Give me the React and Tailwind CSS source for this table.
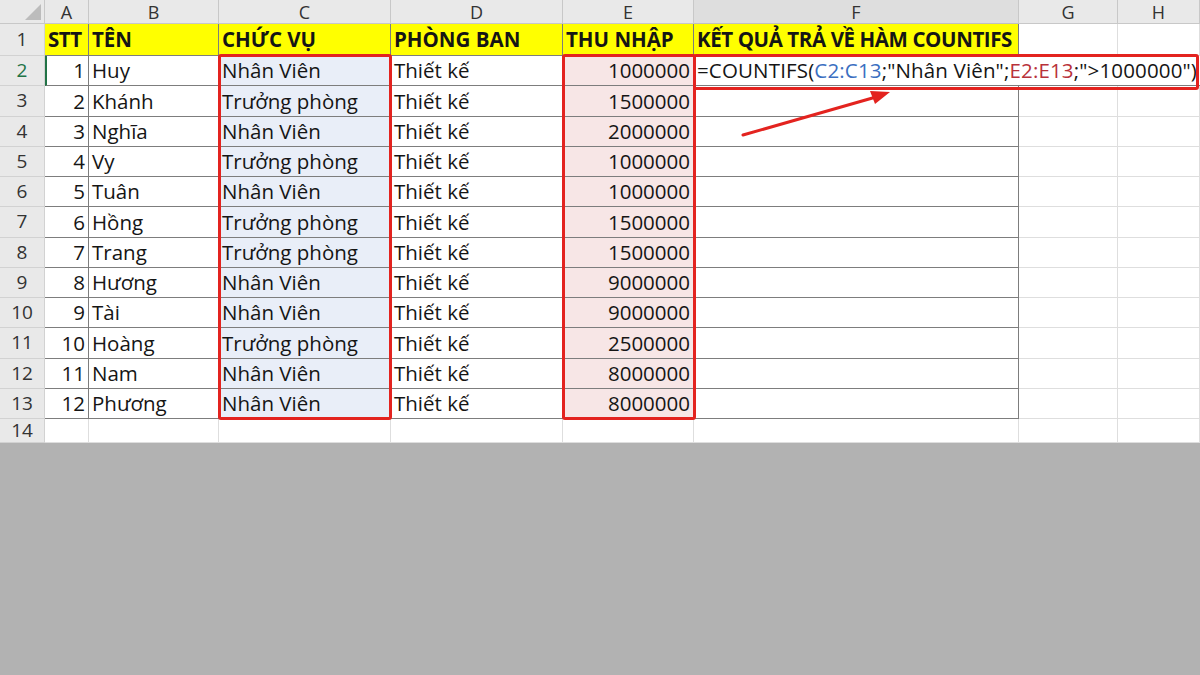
import React from 'react';

const rows = [
  [1, 'Huy', 'Nhân Viên', '1000000'],
  [2, 'Khánh', 'Trưởng phòng', '1500000'],
  [3, 'Nghĩa', 'Nhân Viên', '2000000'],
  [4, 'Vy', 'Trưởng phòng', '1000000'],
  [5, 'Tuân', 'Nhân Viên', '1000000'],
  [6, 'Hồng', 'Trưởng phòng', '1500000'],
  [7, 'Trang', 'Trưởng phòng', '1500000'],
  [8, 'Hương', 'Nhân Viên', '9000000'],
  [9, 'Tài', 'Nhân Viên', '9000000'],
  [10, 'Hoàng', 'Trưởng phòng', '2500000'],
  [11, 'Nam', 'Nhân Viên', '8000000'],
  [12, 'Phương', 'Nhân Viên', '8000000'],
];

const letters = ['A', 'B', 'C', 'D', 'E', 'F', 'G', 'H'];

// table cell with dark border
function Cell({ children, className = '' }) {
  return (
    <div className={`flex items-center px-[3px] border-r border-b border-[#7d7d7d] whitespace-nowrap overflow-visible leading-none ${className}`}>
      {children}
    </div>
  );
}

function Empty() {
  return <div className="border-r border-b border-[#dedede]" />;
}

function RowHead({ n, active }) {
  return (
    <div className={`flex items-center justify-center bg-[#e9e9e9] border-r border-b border-[#d2d2d2] text-[19px] leading-none ${active ? 'text-[#217346]' : 'text-[#333]'}`}>
      {n}
    </div>
  );
}

export default function App() {
  return (
    <div className="w-[1200px] h-[675px] bg-[#b2b2b2] overflow-hidden" style={{ fontFamily: '"Open Sans", "Noto Sans", sans-serif' }}>
      <div className="relative h-[443px] bg-white overflow-hidden text-[20.5px] text-[#151515]">
        <div className="grid grid-cols-[45px_44px_130px_172px_172px_131px_325px_99px_82px] grid-rows-[24px_32px_repeat(12,30.25px)_24px]">
          {/* column header */}
          <div className="bg-[#e9e9e9] border-r border-b border-[#c8c8c8] flex items-end justify-end p-[3px]">
            <div className="w-0 h-0 border-l-[16px] border-l-transparent border-b-[16px] border-b-[#bcbcbc]" />
          </div>
          {letters.map((l) => (
            <div
              key={l}
              className={`flex items-center justify-center border-r border-b text-[18px] leading-none text-[#333] ${l === 'F' ? 'bg-[#dedede] border-b-[#c0c0c0] border-r-[#c8c8c8]' : 'bg-[#e9e9e9] border-[#c8c8c8]'}`}
            >
              {l}
            </div>
          ))}

          {/* row 1 */}
          <RowHead n={1} />
          <Cell className="bg-[#ffff00] font-bold tracking-[-0.5px]">STT</Cell>
          <Cell className="bg-[#ffff00] font-bold">TÊN</Cell>
          <Cell className="bg-[#ffff00] font-bold">CHỨC VỤ</Cell>
          <Cell className="bg-[#ffff00] font-bold">PHÒNG BAN</Cell>
          <Cell className="bg-[#ffff00] font-bold">THU NHẬP</Cell>
          <Cell className="bg-[#ffff00] font-bold tracking-[-0.4px]">KẾT QUẢ TRẢ VỀ HÀM COUNTIFS</Cell>
          <Empty />
          <Empty />

          {rows.map(([n, name, role, pay], i) => (
            <React.Fragment key={n}>
              <RowHead n={i + 2} active={i === 0} />
              <Cell className={`justify-end ${i === 0 ? 'border-l-2 border-l-[#217346]' : ''}`}>{n}</Cell>
              <Cell>{name}</Cell>
              <Cell className="bg-[#e9eef8]">{role}</Cell>
              <Cell>Thiết kế</Cell>
              <Cell className="justify-end bg-[#f7e6e6]">{pay}</Cell>
              {i === 0 ? (
                <div className="col-span-3 flex items-center px-[3px] border-b border-[#7d7d7d] whitespace-nowrap leading-none tracking-[0.15px]">
                  <span>
                    =COUNTIFS(<span className="text-[#3b6fc1]">C2:C13</span>;"Nhân Viên";
                    <span className="text-[#b8323a]">E2:E13</span>;"&gt;1000000")
                  </span>
                </div>
              ) : (
                <>
                  <Cell />
                  <Empty />
                  <Empty />
                </>
              )}
            </React.Fragment>
          ))}

          {/* row 14 */}
          <RowHead n={14} />
          {letters.map((l) => (
            <Empty key={l} />
          ))}
        </div>

        {/* red highlight boxes */}
        <div className="absolute left-[218px] top-[54px] w-[174px] h-[366px] border-[3px] border-[#e3231f] rounded-[3px] z-20" />
        <div className="absolute left-[562px] top-[54px] w-[134px] h-[366px] border-[3px] border-[#e3231f] rounded-[3px] z-20" />
        <div className="absolute left-[693px] top-[54px] w-[506px] h-[36px] border-[3px] border-[#e3231f] rounded-[3px] z-20" />

        {/* arrow */}
        <svg className="absolute left-0 top-0 z-30" width="1200" height="443">
          <line x1="743" y1="135" x2="876" y2="97" stroke="#e3231f" strokeWidth="3" strokeLinecap="round" />
          <polygon points="890,92 870,91 875,104" fill="#e3231f" />
        </svg>
      </div>
    </div>
  );
}
